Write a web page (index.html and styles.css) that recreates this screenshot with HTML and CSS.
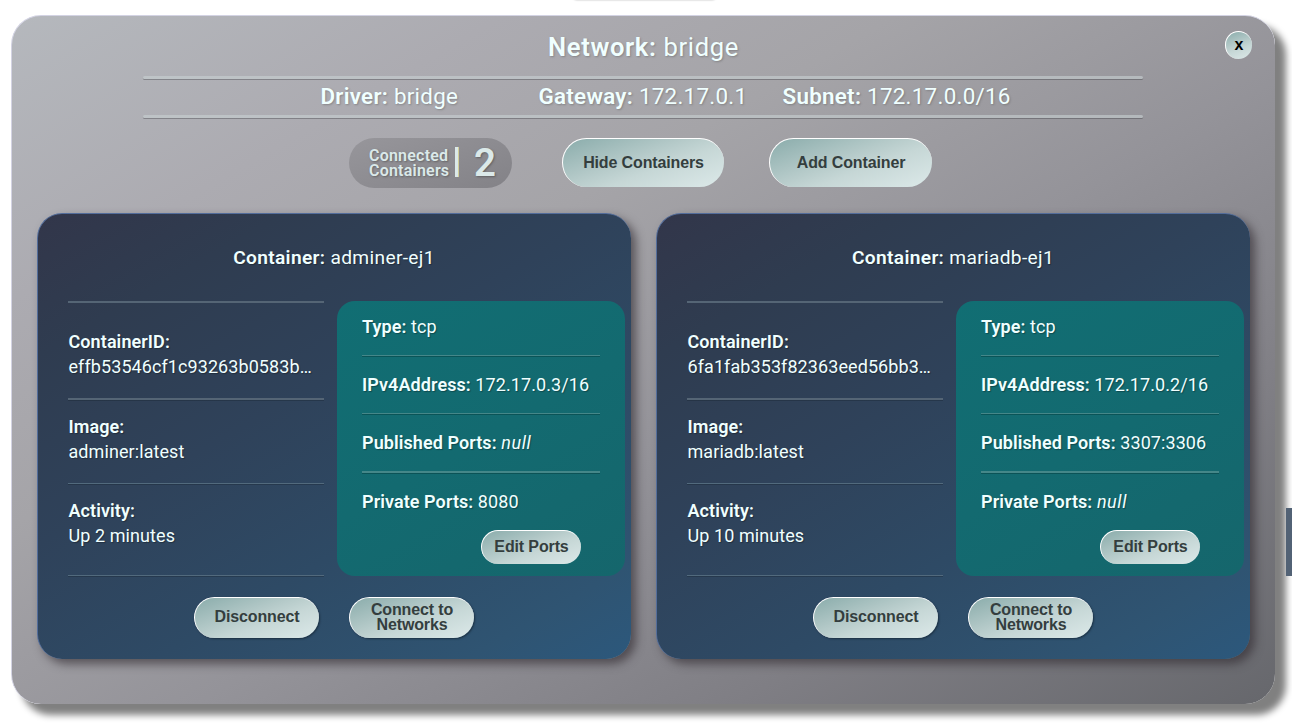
FILE: index.html
```html
<!DOCTYPE html>
<html lang="en">
<head>
<meta charset="utf-8">
<title>Network: bridge</title>
<link rel="stylesheet" href="styles.css">
</head>
<body>
<div class="top-shade"></div>
<main class="network">
  <button class="btn close">x</button>
  <h1 class="network-title"><b>Network:</b> bridge</h1>
  <div class="rule"></div>
  <div class="facts">
    <div class="driver"><b>Driver:</b> bridge</div>
    <div class="gateway"><b>Gateway:</b> 172.17.0.1</div>
    <div class="subnet"><b>Subnet:</b> 172.17.0.0/16</div>
  </div>
  <div class="rule"></div>
  <div class="actions">
    <div class="count"><span class="count-label">Connected<br>Containers</span><span class="count-bar"></span><span class="count-value">2</span></div>
    <button class="btn big">Hide Containers</button>
    <button class="btn big">Add Container</button>
  </div>
  <div class="cards">
    <section class="card">
      <h2 class="card-title"><b>Container:</b> adminer-ej1</h2>
      <div class="card-body">
        <div class="info">
          <div class="item id"><b>ContainerID:</b><span class="clip">effb53546cf1c93263b0583b…</span></div>
          <div class="item image"><b>Image:</b><span>adminer:latest</span></div>
          <div class="item activity"><b>Activity:</b><span>Up 2 minutes</span></div>
        </div>
        <div class="ports">
          <div class="port first"><b>Type:</b> tcp</div>
          <div class="port"><b>IPv4Address:</b> 172.17.0.3/16</div>
          <div class="port thick"><b>Published Ports:</b> <i>null</i></div>
          <div class="port last"><b>Private Ports:</b> 8080</div>
          <button class="btn edit">Edit Ports</button>
        </div>
      </div>
      <div class="card-actions">
        <button class="btn medium">Disconnect</button>
        <button class="btn medium">Connect to<br>Networks</button>
      </div>
    </section>
    <section class="card">
      <h2 class="card-title"><b>Container:</b> mariadb-ej1</h2>
      <div class="card-body">
        <div class="info">
          <div class="item id"><b>ContainerID:</b><span class="clip">6fa1fab353f82363eed56bb3…</span></div>
          <div class="item image"><b>Image:</b><span>mariadb:latest</span></div>
          <div class="item activity"><b>Activity:</b><span>Up 10 minutes</span></div>
        </div>
        <div class="ports">
          <div class="port first"><b>Type:</b> tcp</div>
          <div class="port"><b>IPv4Address:</b> 172.17.0.2/16</div>
          <div class="port thick"><b>Published Ports:</b> 3307:3306</div>
          <div class="port last"><b>Private Ports:</b> <i>null</i></div>
          <button class="btn edit">Edit Ports</button>
        </div>
      </div>
      <div class="card-actions">
        <button class="btn medium">Disconnect</button>
        <button class="btn medium">Connect to<br>Networks</button>
      </div>
    </section>
  </div>
</main>
<div class="scroll-thumb"></div>
</body>
</html>
```
FILE: styles.css
```css
* { box-sizing: border-box; }
html { overflow: hidden; }
body {
  margin: 0;
  padding: 15px 0 0 11px;
  height: 724px;
  overflow: hidden;
  background: #fff;
  color: azure;
  font-family: Roboto, sans-serif;
}
b { font-weight: 600; }

.top-shade {
  position: absolute;
  top: -10px;
  left: 572px;
  width: 145px;
  height: 10px;
  border-radius: 8px;
  box-shadow: 0 0 2px rgba(0, 0, 0, .35);
}
.scroll-thumb {
  position: absolute;
  top: 508px;
  right: 0;
  width: 6px;
  height: 68px;
  background: #526275;
}

.network {
  position: relative;
  width: 1264px;
  height: 689px;
  border-radius: 30px;
  border-top: 1px solid #d3d3e3;
  border-left: 1px solid #d3d3e3;
  background: linear-gradient(150deg, #b5b8bd 0%, #acabb1 20%, #a5a4a8 36%, #949399 56%, #7f7e84 78%, #66676c 100%);
  box-shadow: 10.5px 10.5px 7px gray;
  display: flex;
  flex-direction: column;
}
.network-title {
  margin: 0;
  height: 60px;
  line-height: 62px;
  font-size: 25.6px;
  font-weight: 400;
  letter-spacing: .62px;
  text-align: center;
  text-shadow: 1px 1px 2px rgba(80, 80, 80, .4);
}
.rule {
  width: 1000px;
  height: 3px;
  margin-left: 131px;
  border-radius: 2px;
  background: rgba(200, 208, 210, .6);
  box-shadow: 0 1px 0 rgba(50, 50, 55, .35);
}
.facts {
  display: flex;
  height: 36px;
  padding-left: 308.5px;
  line-height: 35px;
  font-size: 22.4px;
  letter-spacing: .26px;
  text-shadow: 1px 1px 2px rgba(80, 80, 80, .4);
}
.driver { width: 218px; }
.gateway { width: 244px; }

.actions {
  display: flex;
  align-items: flex-start;
  height: 95px;
  padding: 20px 0 0 337px;
}
.count {
  display: flex;
  align-items: center;
  width: 163px;
  height: 50px;
  margin-right: 50px;
  padding-left: 20px;
  border-radius: 25px;
  background: linear-gradient(160deg, #97969b, #838287);
  color: #dbe9e9;
  font-weight: 600;
  text-shadow: 1px 1px 2px rgba(60, 60, 60, .5);
}
.count-label {
  width: 86px;
  font-size: 16px;
  line-height: 15px;
  letter-spacing: .22px;
  white-space: nowrap;
}
.count-bar {
  width: 4px;
  height: 30px;
  margin-top: -2px;
  background: linear-gradient(90deg, #dbe9e9 75%, #d2cf98 75%);
}
.count-value {
  margin-left: 15px;
  font-size: 38.4px;
  line-height: 50px;
}

.btn {
  padding: 0 0 2px;
  border: 1px solid;
  border-color: #fff #cfdfdd #cfdfdd #fff;
  border-right-width: 0;
  border-bottom-width: 0;
  background: linear-gradient(160deg, #8aacab 0%, #b5cac9 42%, #c6d7d6 60%, #dce9e9 100%);
  color: #343e3e;
  font: bold 16px/15px "Liberation Sans", Arial, sans-serif;
  letter-spacing: -.13px;
  text-align: center;
}
.big {
  width: 162px;
  height: 49px;
  margin-right: 45px;
  border-radius: 25px;
}
.big:last-child { width: 163px; }
.close {
  position: absolute;
  top: 15px;
  right: 23px;
  width: 27px;
  height: 28px;
  padding-bottom: 3px;
  border-radius: 14px;
  color: #000;
  font-size: 16px;
}

.cards {
  display: flex;
  gap: 25px;
  padding-left: 25px;
}
.card {
  width: 594px;
  height: 446px;
  border-top: 1px solid #536d9b;
  border-left: 1px solid #536d9b;
  border-radius: 25px;
  background: linear-gradient(150deg, #32364a 0%, #2f3c50 18%, #2f425a 42%, #2e4a65 65%, #2f5472 88%, #2c587c 100%);
  box-shadow: 5px 5px 10px rgba(50, 45, 50, .65);
  text-shadow: 1px 1px 1px rgba(0, 0, 0, .3);
}
.card-title {
  height: 87px;
  margin: 0;
  padding-right: 1px;
  line-height: 87px;
  font-size: 19.2px;
  font-weight: 400;
  letter-spacing: .32px;
  text-align: center;
}
.card-body {
  display: flex;
  height: 275px;
  padding-left: 30px;
  font-size: 18px;
  letter-spacing: .08px;
}
.info {
  width: 256px;
  margin-right: 13px;
  border-top: 2px solid #556575;
}
.item {
  display: flex;
  flex-direction: column;
  padding-left: .5px;
  border-bottom: 1px solid #526a7d;
  box-shadow: 0 1px 0 rgba(20, 30, 40, .3);
  line-height: 25px;
}
.clip { white-space: nowrap; }
.id { height: 97px; padding-top: 26px; border-bottom: 2px solid #556575; }
.image { height: 84px; padding-top: 14px; }
.activity { height: 92px; padding-top: 14px; }

.ports {
  width: 288px;
  height: 275px;
  padding: 0 25px;
  border-radius: 18px;
  background: linear-gradient(150deg, #116e73, #136a70 50%, #15666c);
}
.port {
  height: 58px;
  border-bottom: 1px solid #458789;
  box-shadow: 0 1px 0 rgba(0, 50, 50, .4);
  line-height: 57px;
  white-space: nowrap;
}
.port i { letter-spacing: .6px; }
.first { height: 55px; line-height: 52px; }
.thick { height: 59px; border-bottom-width: 2px; }
.last { height: 57px; border: 0; box-shadow: none; }
.edit {
  display: block;
  width: 100px;
  height: 34px;
  margin-left: 119px;
  border-radius: 17px;
}
.card-actions {
  display: flex;
  gap: 30px;
  padding: 21px 0 0 156px;
}
.medium {
  width: 125px;
  height: 41px;
  padding-bottom: 3px;
  border-radius: 21px;
  box-shadow: 1px 1px 2px rgba(20, 35, 50, .7);
}
```
